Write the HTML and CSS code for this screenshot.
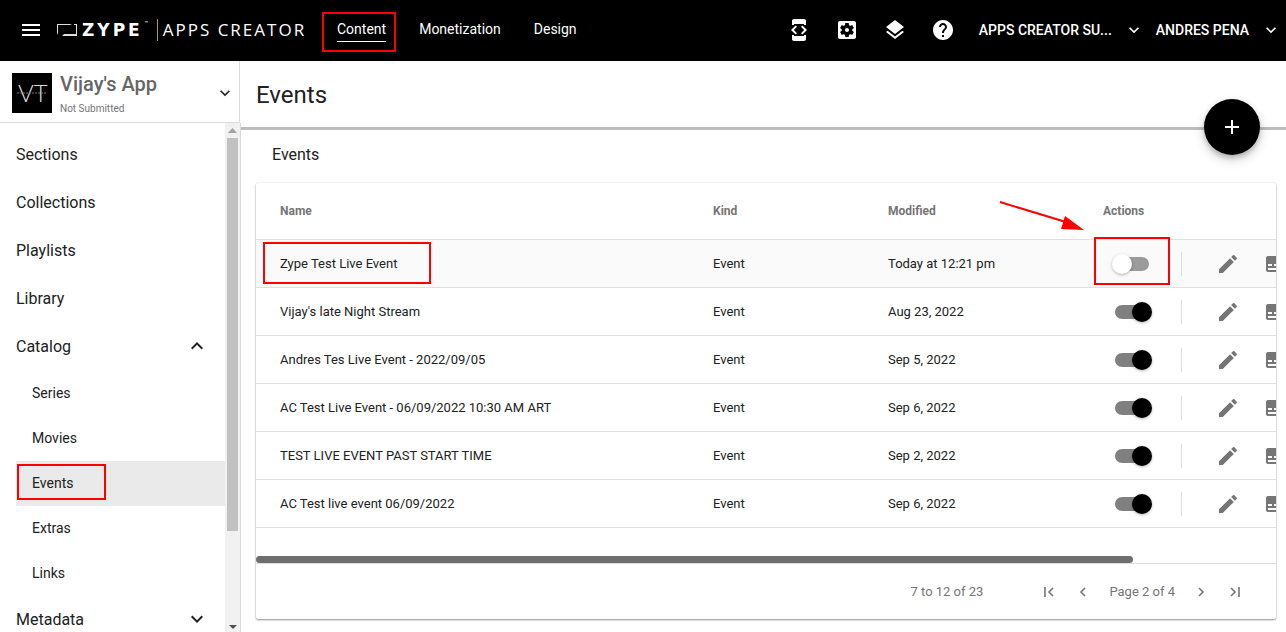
FILE: index.html
```html
<!DOCTYPE html>
<html lang="en">
<head>
    <meta charset="UTF-8">
    <meta name="viewport" content="width=device-width, initial-scale=1.0">
    <title>Apps Creator - Events</title>
    <link rel="stylesheet" href="styles.css">
</head>
<body>
    <!-- icons used more than once -->
    <svg class="sprite" aria-hidden="true">
        <symbol id="down" viewBox="0 0 24 24"><path d="M7.41 8.59L12 13.17l4.59-4.58L18 10l-6 6-6-6z"/></symbol>
        <symbol id="up" viewBox="0 0 24 24"><path d="M7.41 15.41L12 10.83l4.59 4.58L18 14l-6-6-6 6z"/></symbol>
        <symbol id="edit" viewBox="0 0 24 24"><path d="M3 17.25V21h3.75L17.81 9.94l-3.75-3.75L3 17.25zM20.71 7.04c.39-.39.39-1.02 0-1.41l-2.34-2.34c-.39-.39-1.02-.39-1.41 0l-1.83 1.83 3.75 3.75 1.83-1.83z"/></symbol>
        <symbol id="subtitles" viewBox="0 0 24 24"><path d="M20 4H4c-1.1 0-2 .9-2 2v12c0 1.1.9 2 2 2h16c1.1 0 2-.9 2-2V6c0-1.1-.9-2-2-2zM4 12h4v2H4v-2zm10 6H4v-2h10v2zm6 0h-4v-2h4v2zm0-4H10v-2h10v2z"/></symbol>
    </svg>

    <header class="topbar">
        <button class="icon-btn menu-btn" aria-label="Menu">
            <svg class="icon" viewBox="0 0 24 24"><path d="M3 18h18v-2H3v2zm0-5h18v-2H3v2zm0-7v2h18V6H3z"/></svg>
        </button>
        <a class="brand" href="#">
            <svg class="brand-mark" viewBox="0 0 21 14"><path d="M0 12V1h15l-2 1H1v8zM17 1h3v12H5l2-2h12V2h-2z" fill="#ddd"/></svg>
            <span class="brand-name">ZYPE</span>
            <span class="brand-tm">™</span>
            <span class="brand-product">APPS CREATOR</span>
        </a>
        <nav class="tabs">
            <a class="tab active" href="#">Content<span class="mark mark-tab"></span></a>
            <a class="tab" href="#">Monetization</a>
            <a class="tab" href="#">Design</a>
        </nav>
        <div class="tools">
            <button class="icon-btn" aria-label="Developer mode">
                <svg class="icon" viewBox="0 0 24 24"><path d="M7 5h10v2h2V3c0-1.1-.9-1.99-2-1.99L7 1c-1.1 0-2 .9-2 2v4h2V5zm8.41 11.59L20 12l-4.59-4.59L14 8.83 17.17 12 14 15.17l1.41 1.42zM10 15.17L6.83 12 10 8.83 8.59 7.41 4 12l4.59 4.59L10 15.17zM17 19H7v-2H5v4c0 1.1.9 2 2 2h10c1.1 0 2-.9 2-2v-4h-2v2z"/><path d="M6 3h12v3H6zM6 18h12v3H6z"/></svg>
            </button>
            <button class="icon-btn" aria-label="Settings">
                <svg class="icon" viewBox="0 0 24 24"><path d="M12 10c-1.1 0-2 .9-2 2s.9 2 2 2 2-.9 2-2-.9-2-2-2zm7-7H5c-1.11 0-2 .9-2 2v14c0 1.1.89 2 2 2h14c1.11 0 2-.9 2-2V5c0-1.1-.89-2-2-2zm-1.75 9c0 .23-.02.46-.05.68l1.48 1.16c.13.11.17.3.08.45l-1.4 2.42c-.09.15-.27.21-.43.15l-1.74-.7c-.36.28-.76.51-1.18.69l-.26 1.85c-.03.17-.18.3-.35.3h-2.8c-.17 0-.32-.13-.35-.29l-.26-1.85c-.43-.18-.82-.41-1.18-.69l-1.74.7c-.16.06-.34 0-.43-.15l-1.4-2.42c-.09-.15-.05-.34.08-.45l1.48-1.16c-.03-.23-.05-.46-.05-.69 0-.23.02-.46.05-.68l-1.48-1.16c-.13-.11-.17-.3-.08-.45l1.4-2.42c.09-.15.27-.21.43-.15l1.74.7c.36-.28.76-.51 1.18-.69l.26-1.85c.03-.17.18-.3.35-.3h2.8c.17 0 .32.13.35.29l.26 1.85c.43.18.82.41 1.18.69l1.74-.7c.16-.06.34 0 .43.15l1.4 2.42c.09.15.05.34-.08.45l-1.48 1.16c.03.23.05.46.05.69z"/></svg>
            </button>
            <button class="icon-btn" aria-label="Layers">
                <svg class="icon" viewBox="0 0 24 24"><path d="M11.99 18.54l-7.37-5.73L3 14.07l9 7 9-7-1.63-1.27-7.38 5.74zM12 16l7.36-5.73L21 9l-9-7-9 7 1.63 1.27L12 16z"/></svg>
            </button>
            <button class="icon-btn" aria-label="Help">
                <svg class="icon" viewBox="0 0 24 24"><path d="M12 2C6.48 2 2 6.48 2 12s4.48 10 10 10 10-4.48 10-10S17.52 2 12 2zm1 17h-2v-2h2v2zm2.07-7.75l-.9.92C13.45 12.9 13 13.5 13 15h-2v-.5c0-1.1.45-2.1 1.17-2.83l1.24-1.26c.37-.36.59-.86.59-1.41 0-1.1-.9-2-2-2s-2 .9-2 2H8c0-2.21 1.79-4 4-4s4 1.79 4 4c0 .88-.36 1.68-.93 2.25z"/></svg>
            </button>
        </div>
        <button class="account account-org"><span>APPS CREATOR SU...</span><svg class="chevron"><use href="#down"/></svg></button>
        <button class="account"><span>ANDRES PENA</span><svg class="chevron"><use href="#down"/></svg></button>
    </header>

    <div class="layout">
        <aside class="sidebar">
            <button class="app-picker">
                <svg class="app-logo" viewBox="0 0 40 40">
                    <rect width="40" height="40" fill="#000"/>
                    <text class="app-initials" x="6" y="29">VT</text>
                    <path d="M5 20h30" stroke="#777" stroke-dasharray="2 1"/>
                </svg>
                <span class="app-info">
                    <span class="app-name">Vijay's App</span>
                    <span class="app-status">Not Submitted</span>
                </span>
                <svg class="chevron"><use href="#down"/></svg>
            </button>
            <div class="side-body">
                <nav class="side-nav">
                    <a class="item" href="#">Sections</a>
                    <a class="item" href="#">Collections</a>
                    <a class="item" href="#">Playlists</a>
                    <a class="item" href="#">Library</a>
                    <a class="item" href="#">Catalog <svg class="icon"><use href="#up"/></svg></a>
                    <a class="subitem" href="#">Series</a>
                    <a class="subitem" href="#">Movies</a>
                    <a class="subitem active" href="#">Events<span class="mark mark-side"></span></a>
                    <a class="subitem" href="#">Extras</a>
                    <a class="subitem" href="#">Links</a>
                    <a class="item" href="#">Metadata <svg class="icon"><use href="#down"/></svg></a>
                </nav>
                <div class="scrollbar">
                    <svg viewBox="0 0 15 15"><path d="M3 10l4.500-5 4.500 5z" fill="#a3a3a3"/></svg>
                    <div class="track"><div class="thumb"></div></div>
                    <svg viewBox="0 0 15 15"><path d="M4 8h8l-4 4z" fill="#505050"/></svg>
                </div>
            </div>
        </aside>

        <main class="main">
            <div class="page-head">
                <h1>Events</h1>
                <button class="fab" aria-label="Add event">
                    <svg class="icon" viewBox="0 0 24 24"><path d="M19 13h-6v6h-2v-6H5v-2h6V5h2v6h6v2z"/></svg>
                </button>
            </div>
            <h2>Events</h2>
            <section class="card">
                <div class="table-wrap">
                    <table>
                        <colgroup><col class="col-name"><col class="col-kind"><col class="col-modified"><col></colgroup>
                        <thead>
                            <tr>
                                <th>Name</th>
                                <th>Kind</th>
                                <th>Modified</th>
                                <th>Actions
                                    <svg class="arrow" viewBox="0 0 86 32"><path d="M1 2l66 20" stroke="#f00" stroke-width="2"/><path d="M66 16l19 14-23-1z" fill="#f00"/></svg>
                                </th>
                            </tr>
                        </thead>
                        <tbody>
                            <tr class="hovered">
                                <td>Zype Test Live Event<span class="mark mark-name"></span></td>
                                <td>Event</td>
                                <td>Today at 12:21 pm</td>
                                <td><div class="actions">
                                    <input class="switch" type="checkbox" aria-label="Zype Test Live Event active">
                                    <button class="icon-btn edit" aria-label="Edit"><svg class="icon"><use href="#edit"/></svg></button>
                                    <button class="icon-btn" aria-label="Subtitles"><svg class="icon"><use href="#subtitles"/></svg></button>
                                </div><span class="mark mark-switch"></span></td>
                            </tr>
                            <tr>
                                <td>Vijay's late Night Stream</td>
                                <td>Event</td>
                                <td>Aug 23, 2022</td>
                                <td><div class="actions">
                                    <input class="switch" type="checkbox" aria-label="Vijay's late Night Stream active" checked>
                                    <button class="icon-btn edit" aria-label="Edit"><svg class="icon"><use href="#edit"/></svg></button>
                                    <button class="icon-btn" aria-label="Subtitles"><svg class="icon"><use href="#subtitles"/></svg></button>
                                </div></td>
                            </tr>
                            <tr>
                                <td>Andres Tes Live Event - 2022/09/05</td>
                                <td>Event</td>
                                <td>Sep 5, 2022</td>
                                <td><div class="actions">
                                    <input class="switch" type="checkbox" aria-label="Andres Tes Live Event active" checked>
                                    <button class="icon-btn edit" aria-label="Edit"><svg class="icon"><use href="#edit"/></svg></button>
                                    <button class="icon-btn" aria-label="Subtitles"><svg class="icon"><use href="#subtitles"/></svg></button>
                                </div></td>
                            </tr>
                            <tr>
                                <td>AC Test Live Event - 06/09/2022 10:30 AM ART</td>
                                <td>Event</td>
                                <td>Sep 6, 2022</td>
                                <td><div class="actions">
                                    <input class="switch" type="checkbox" aria-label="AC Test Live Event active" checked>
                                    <button class="icon-btn edit" aria-label="Edit"><svg class="icon"><use href="#edit"/></svg></button>
                                    <button class="icon-btn" aria-label="Subtitles"><svg class="icon"><use href="#subtitles"/></svg></button>
                                </div></td>
                            </tr>
                            <tr>
                                <td>TEST LIVE EVENT PAST START TIME</td>
                                <td>Event</td>
                                <td>Sep 2, 2022</td>
                                <td><div class="actions">
                                    <input class="switch" type="checkbox" aria-label="Past start time event active" checked>
                                    <button class="icon-btn edit" aria-label="Edit"><svg class="icon"><use href="#edit"/></svg></button>
                                    <button class="icon-btn" aria-label="Subtitles"><svg class="icon"><use href="#subtitles"/></svg></button>
                                </div></td>
                            </tr>
                            <tr>
                                <td>AC Test live event 06/09/2022</td>
                                <td>Event</td>
                                <td>Sep 6, 2022</td>
                                <td><div class="actions">
                                    <input class="switch" type="checkbox" aria-label="AC Test live event active" checked>
                                    <button class="icon-btn edit" aria-label="Edit"><svg class="icon"><use href="#edit"/></svg></button>
                                    <button class="icon-btn" aria-label="Subtitles"><svg class="icon"><use href="#subtitles"/></svg></button>
                                </div></td>
                            </tr>
                        </tbody>
                    </table>
                </div>
                <div class="h-scroll"><div class="h-thumb"></div></div>
                <footer class="pager">
                    <span class="range">7 to 12 of 23</span>
                    <button aria-label="First page"><svg viewBox="0 0 16 16"><path d="M4 3v10M12 4L8 8l4 4"/></svg></button>
                    <button aria-label="Previous page"><svg viewBox="0 0 16 16"><path d="M10 4L6 8l4 4"/></svg></button>
                    <span class="page">Page 2 of 4</span>
                    <button aria-label="Next page"><svg viewBox="0 0 16 16"><path d="M6 4l4 4-4 4"/></svg></button>
                    <button aria-label="Last page"><svg viewBox="0 0 16 16"><path d="M4 4l4 4-4 4M12 3v10"/></svg></button>
                </footer>
            </section>
        </main>
    </div>
</body>
</html>
```
FILE: styles.css
```css
* { box-sizing: border-box; }
body { margin: 0; height: 100vh; display: flex; flex-direction: column; overflow: hidden; font-family: Roboto, "Liberation Sans", sans-serif; font-size: 14px; color: #212121; background: #fff; }
a { color: inherit; text-decoration: none; }
button { font: inherit; color: inherit; background: none; border: 0; padding: 0; cursor: pointer; }
svg { fill: currentColor; display: block; flex-shrink: 0; }
.sprite { position: absolute; width: 0; height: 0; }
.icon { width: 24px; height: 24px; }
.chevron { width: 20px; height: 20px; }

/* red highlight frames */
.mark { position: absolute; border: 2px solid #f00; pointer-events: none; }
.mark-tab { top: -5px; bottom: -11px; left: -15px; right: -10px; }
.mark-side { left: 1px; top: 3px; width: 89px; height: 36px; }
.mark-name { left: 7px; top: 2px; width: 168px; height: 42px; }
.mark-switch { left: 15px; top: -3px; width: 76px; height: 48px; }
.arrow { position: absolute; left: -80px; top: 17px; width: 86px; height: 32px; }

/* top bar */
.topbar { height: 61px; flex-shrink: 0; display: flex; align-items: center; background: #000; color: #fff; padding: 0 5px 2px 19px; }
.menu-btn { margin-right: 14px; }
.brand { display: flex; align-items: center; width: 250px; }
.brand-mark { width: 21px; height: 14px; margin-right: 4px; }
.brand-name { font: bold 17px "DejaVu Sans", sans-serif; letter-spacing: 3px; }
.brand-tm { width: 6px; margin: 0 4px 0 2px; font-size: 6px; align-self: flex-start; }
.brand-product { margin-left: 2px; padding-left: 5px; border-left: 1px solid #b59a2c; font-family: "Open Sans", sans-serif; font-size: 17px; line-height: 22px; letter-spacing: 2px; white-space: nowrap; }
.tabs { display: flex; gap: 33px; margin-left: 30px; }
.tab { position: relative; padding: 4px 0; line-height: 16px; border-bottom: 1px solid transparent; }
.tab.active { border-color: #fff; }
.tools { display: flex; gap: 24px; margin-left: auto; margin-right: 24px; }
.account { display: flex; align-items: center; gap: 12px; font-weight: 500; white-space: nowrap; }
.account-org { margin-right: 12px; }

.layout { flex: 1; display: flex; min-height: 0; }

/* sidebar */
.sidebar { width: 241px; flex-shrink: 0; display: flex; flex-direction: column; }
.app-picker { display: flex; align-items: center; height: 62px; flex-shrink: 0; margin-right: 1px; padding: 2px 4px 0 12px; border-right: 1px solid #ddd; border-bottom: 1px solid #ddd; text-align: left; }
.app-logo { width: 40px; height: 40px; margin-right: 8px; }
.app-initials { font-family: Lato, sans-serif; font-weight: 300; font-size: 24px; fill: #ddd; }
.app-info { flex: 1; display: flex; flex-direction: column; gap: 4px; }
.app-name { font-size: 20px; line-height: 28px; font-weight: 500; color: #666; }
.app-status { font-size: 10px; line-height: 14px; color: #757575; }
.side-body { flex: 1; display: flex; min-height: 0; border-right: 1px solid #ddd; }
.side-nav { flex: 1; padding: 8px 0 0 16px; overflow: hidden; }
.item { display: flex; align-items: center; justify-content: space-between; height: 48px; padding: 0 16px 2px 0; font-size: 16px; }
.subitem { position: relative; display: flex; align-items: center; height: 45px; padding: 0 0 2px 16px; }
.subitem.active { background: #eaeaea; }
.scrollbar { width: 15px; display: flex; flex-direction: column; background: #f1f1f1; }
.scrollbar svg { width: 15px; height: 15px; }
.track { flex: 1; padding: 0 2px; }
.thumb { height: 82%; background: #c1c1c1; }

/* main area */
.main { flex: 1; min-width: 0; }
.page-head { position: relative; display: flex; align-items: center; height: 69px; padding: 2px 0 0 15px; border-bottom: 3px solid #bdbdbd; }
h1 { margin: 0; font-size: 24px; font-weight: 400; }
h2 { margin: 0; padding: 15px 31px 18px; font-size: 16px; line-height: 20px; font-weight: 400; }
.fab { position: absolute; right: 26px; bottom: -28px; width: 56px; height: 56px; display: flex; align-items: center; justify-content: center; border-radius: 50%; background: #000; color: #fff; box-shadow: 0 3px 5px rgba(0,0,0,.2), 0 5px 12px rgba(0,0,0,.16); }
.card { margin: 0 10px 0 15px; border-radius: 2px; box-shadow: 0 1px 2px rgba(0,0,0,.4), 0 0 2px rgba(0,0,0,.12); }
.table-wrap { overflow: hidden; }
table { width: 116%; table-layout: fixed; border-collapse: separate; border-spacing: 0; }
.col-name { width: 433px; }
.col-kind { width: 175px; }
.col-modified { width: 215px; }
th, td { position: relative; height: 48px; padding: 0 24px; border-bottom: 1px solid #e0e0e0; text-align: left; font-size: 13px; white-space: nowrap; }
th { height: 57px; font-size: 12px; font-weight: 700; color: #757575; }
.hovered td { background: #fafafa; }
.actions { display: flex; align-items: center; padding-left: 12px; color: #757575; }
.switch { appearance: none; position: relative; width: 34px; height: 14px; margin: 0; border-radius: 7px; background: #9b9b9b; }
.switch::before { content: ""; position: absolute; left: -3px; top: -3px; width: 20px; height: 20px; border-radius: 50%; background: #fff; box-shadow: 0 1px 3px rgba(0,0,0,.3); }
.switch:checked { background: #808080; }
.switch:checked::before { left: 17px; background: #000; }
.edit { margin-left: 32px; padding-left: 34px; margin-right: 24px; border-left: 1px solid #ddd; }
.h-scroll { height: 36px; padding-top: 28px; border-bottom: 1px solid #e0e0e0; }
.h-thumb { width: 86%; height: 7px; border-radius: 4px; background: #6e6e6e; }
.pager { display: flex; align-items: center; justify-content: flex-end; height: 55px; padding-right: 33px; font-size: 13px; color: #757575; }
.pager svg { width: 16px; height: 16px; fill: none; stroke: currentColor; stroke-width: 1.6; }
.range { margin-right: 58px; }
.pager button + button { margin-left: 18px; }
.page { margin: 0 18px; }
```
